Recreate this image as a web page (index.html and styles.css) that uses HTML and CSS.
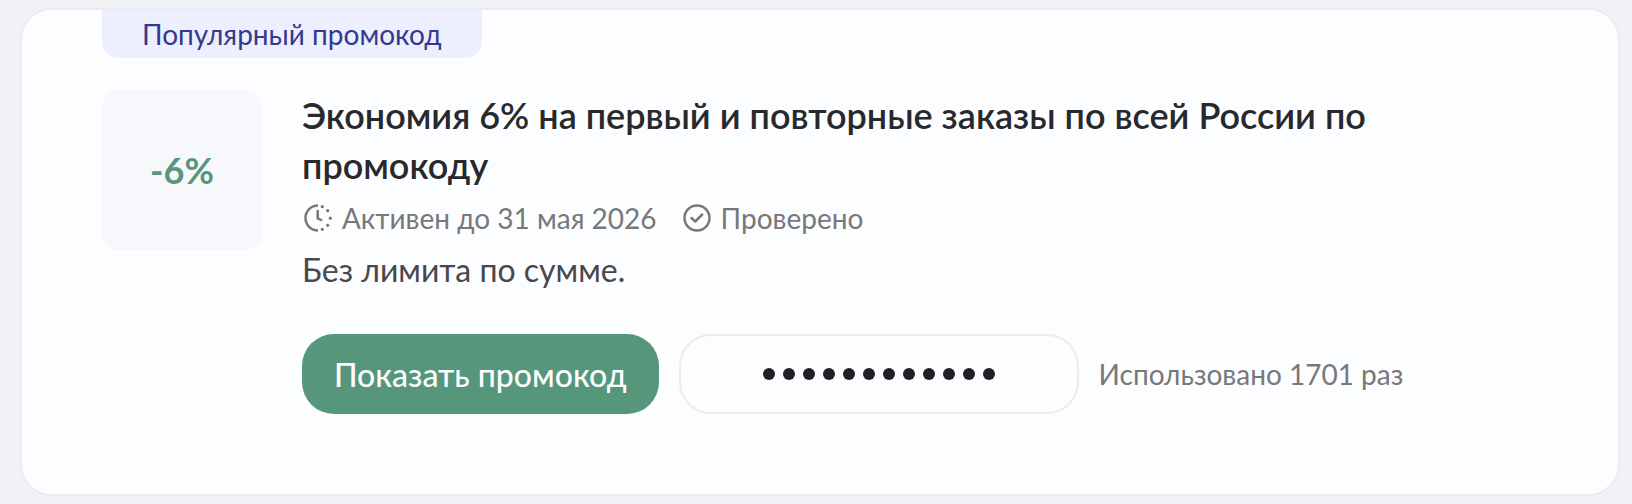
FILE: index.html
```html
<!DOCTYPE html>
<html lang="ru">

<head>
    <meta charset="UTF-8">
    <meta name="viewport" content="width=device-width, initial-scale=1.0">
    <title>Промокод</title>
    <link rel="stylesheet" href="styles.css">
</head>

<body>
    <article class="card">
        <div class="card-tag">Популярный промокод</div>
        <div class="card-body">
            <div class="discount">-6%</div>
            <div class="info">
                <h2 class="title">Экономия 6% на первый и повторные заказы по всей России по промокоду</h2>
                <div class="meta">
                    <span class="meta-item">
                        <svg class="icon" viewBox="0 0 32 32" fill="none" stroke="currentColor" stroke-width="2.5" stroke-linecap="round" stroke-linejoin="round">
                            <path d="M16 3.500a12.500 12.500 0 0 0 0 25" stroke-linecap="butt" />
                            <path d="M15.700 9v7.300l3.500 1.700" />
                            <g fill="currentColor" stroke="none">
                                <circle cx="20.300" cy="4.700" r="1.600" />
                                <circle cx="25.700" cy="8.700" r="1.600" />
                                <circle cx="28.300" cy="16.200" r="1.600" />
                                <circle cx="25.700" cy="23.300" r="1.600" />
                                <circle cx="20.300" cy="27.300" r="1.600" />
                            </g>
                        </svg>
                        Активен до 31 мая 2026
                    </span>
                    <span class="meta-item">
                        <svg class="icon" viewBox="0 0 32 32" fill="none" stroke="currentColor" stroke-width="2.5" stroke-linecap="round" stroke-linejoin="round">
                            <circle cx="16" cy="16" r="12.500" />
                            <path d="M10.500 16l3.700 3.500 7-7" />
                        </svg>
                        Проверено
                    </span>
                </div>
                <p class="description">Без лимита по сумме.</p>
                <div class="actions">
                    <button type="button" class="show-button">Показать промокод</button>
                    <div class="code">
                        <span class="dot"></span>
                        <span class="dot"></span>
                        <span class="dot"></span>
                        <span class="dot"></span>
                        <span class="dot"></span>
                        <span class="dot"></span>
                        <span class="dot"></span>
                        <span class="dot"></span>
                        <span class="dot"></span>
                        <span class="dot"></span>
                        <span class="dot"></span>
                        <span class="dot"></span>
                    </div>
                    <span class="used">Использовано 1701 раз</span>
                </div>
            </div>
        </div>
    </article>
</body>

</html>
```
FILE: styles.css
```css
* {
    box-sizing: border-box;
}

body {
    margin: 0;
    padding: 8px 12px 8px 20px;
    font-family: Lato, "Open Sans", sans-serif;
    font-size: 28px;
    line-height: 40px;
    color: #77787a;
    background-color: #f1f2f6;
}

.card {
    padding: 0 80px 80px;
    background-color: #fcfdff;
    border: 2px solid #ebecef;
    border-radius: 32px;
}

.card-tag {
    width: fit-content;
    height: 48px;
    padding: 4px 40px;
    color: #343a8e;
    background-color: #edeefe;
    border-radius: 0 0 16px 16px;
}

.card-body {
    display: flex;
    gap: 40px;
    margin-top: 32px;
}

.discount {
    display: flex;
    flex-shrink: 0;
    align-items: center;
    justify-content: center;
    width: 160px;
    height: 160px;
    font-size: 36px;
    font-weight: 700;
    color: #56967a;
    background-color: #f7f8fb;
    border-radius: 16px;
}

.info {
    flex: 1;
}

.title {
    margin: 0;
    font-size: 36px;
    font-weight: 600;
    line-height: 50px;
    color: #28292c;
}

.meta {
    display: flex;
    flex-wrap: wrap;
    gap: 24px;
    margin-top: 8px;
}

.meta-item {
    display: flex;
    align-items: center;
    gap: 8px;
}

.icon {
    width: 32px;
    height: 32px;
}

.description {
    margin: 8px 0 0;
    font-size: 32px;
    line-height: 48px;
    color: #47484b;
}

.actions {
    display: flex;
    flex-wrap: wrap;
    align-items: center;
    gap: 20px;
    margin-top: 40px;
}

.show-button {
    height: 80px;
    padding: 0 32px;
    font-family: inherit;
    font-size: 32px;
    font-weight: 500;
    color: #fcfdff;
    background-color: #56967a;
    border: none;
    border-radius: 32px;
    cursor: pointer;
}

.code {
    display: flex;
    align-items: center;
    justify-content: center;
    gap: 8px;
    width: 400px;
    height: 80px;
    border: 2px solid #ebecee;
    border-radius: 32px;
}

.dot {
    width: 12px;
    height: 12px;
    background-color: #202124;
    border-radius: 50%;
}
```
